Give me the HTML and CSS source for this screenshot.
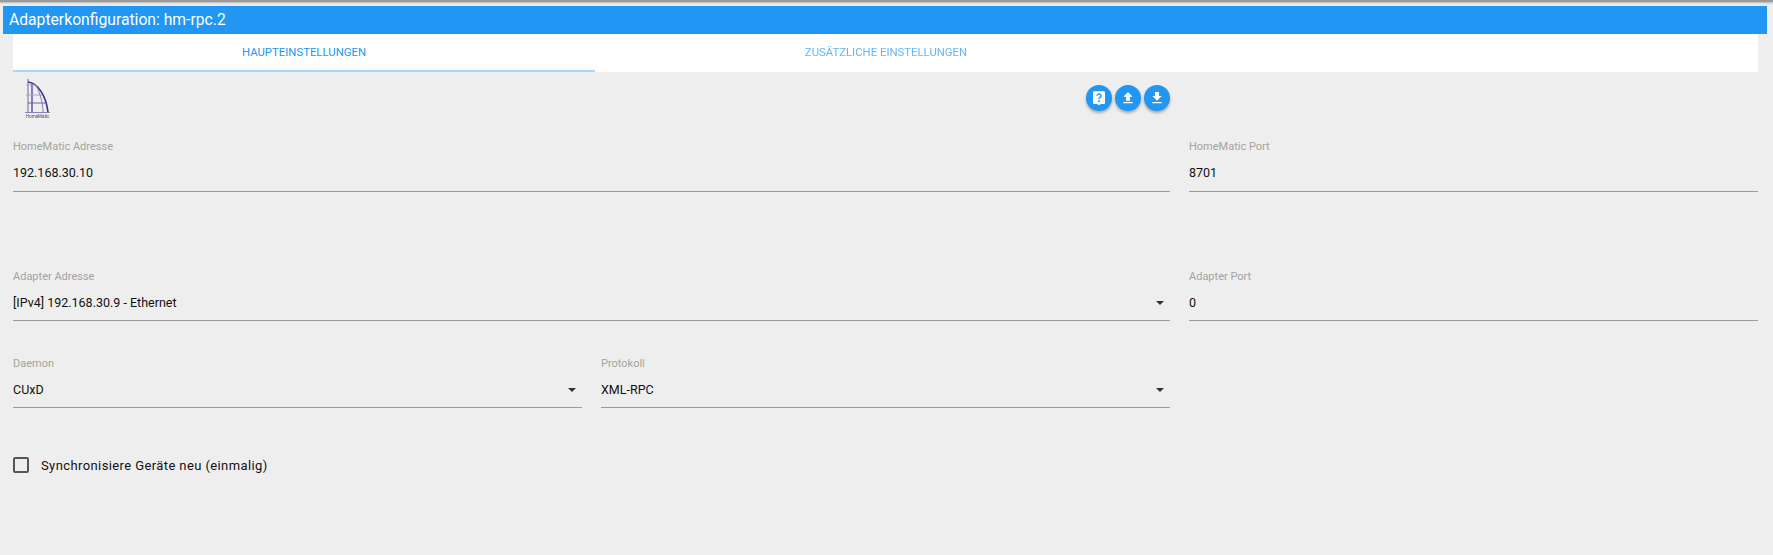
FILE: index.html
```html
<!DOCTYPE html>
<html lang="de">
<head>
<meta charset="utf-8">
<title>Adapterkonfiguration: hm-rpc.2</title>
<link rel="stylesheet" href="styles.css">
</head>
<body>
<div class="topline"></div>
<header class="title">Adapterkonfiguration: hm-rpc.2</header>
<main class="content">
  <nav class="tabs">
    <div class="tab active">Haupteinstellungen</div>
    <div class="tab">Zusätzliche Einstellungen</div>
  </nav>
  <section class="grid toolbar">
    <div class="toolbar-main">
      <svg class="logo" width="32" height="42" viewBox="0 0 32 42">
        <g fill="none" stroke="#3b2f8f">
          <path d="M5 1V34" stroke-width="1" opacity=".7"/>
          <path d="M9 5V34" stroke-width="1.200"/>
          <path d="M5 4C15 5 23 18 25 34" stroke-width="1.600"/>
          <path d="M3 7H13" stroke="#a5a1c8"/>
          <path d="M3 17H19" stroke="#a5a1c8"/>
          <path d="M5 25H22" stroke="#6a60ad"/>
          <path d="M13 7C17 15 20 25 20 34" stroke="#8580bd"/>
          <path d="M2 34.500H27" stroke="#8580bd"/>
        </g>
        <text x="3" y="39.500" class="logo-text">HomeMatic</text>
      </svg>
      <div class="actions">
        <button class="fab" type="button" aria-label="Hilfe">
          <svg width="16" height="16" viewBox="0 0 24 24"><path fill="#fff" d="M5 2h14a2 2 0 0 1 2 2v15a2 2 0 0 1-2 2h-4l-3 2-3-2H5a2 2 0 0 1-2-2V4a2 2 0 0 1 2-2z"/><path fill="none" stroke="#2196f3" stroke-width="2.200" d="M9.200 8.800a2.900 2.900 0 1 1 4.500 2.400c-1.100.8-1.700 1.300-1.700 2.800"/><path fill="#2196f3" d="M10.800 15.500h2.400v2.400h-2.400z"/></svg>
        </button>
        <button class="fab" type="button" aria-label="Hochladen">
          <svg width="16" height="16" viewBox="0 0 24 24"><path fill="#fff" d="M9 16h6v-6h4l-7-7-7 7h4v6zm-4 2h14v2H5v-2z"/></svg>
        </button>
        <button class="fab" type="button" aria-label="Herunterladen">
          <svg width="16" height="16" viewBox="0 0 24 24"><path fill="#fff" d="M19 9h-4V3H9v6H5l7 7 7-7zM5 18v2h14v-2H5z"/></svg>
        </button>
      </div>
    </div>
  </section>
  <section class="grid row-first">
    <div class="field span2">
      <label class="label">HomeMatic Adresse</label>
      <div class="value">192.168.30.10</div>
    </div>
    <div class="field">
      <label class="label">HomeMatic Port</label>
      <div class="value">8701</div>
    </div>
  </section>
  <section class="grid row-second">
    <div class="field span2">
      <label class="label">Adapter Adresse</label>
      <div class="value select">[IPv4] 192.168.30.9 - Ethernet</div>
    </div>
    <div class="field">
      <label class="label">Adapter Port</label>
      <div class="value">0</div>
    </div>
  </section>
  <section class="grid row-third">
    <div class="field">
      <label class="label">Daemon</label>
      <div class="value select">CUxD</div>
    </div>
    <div class="field">
      <label class="label">Protokoll</label>
      <div class="value select">XML-RPC</div>
    </div>
  </section>
  <div class="check-row">
    <span class="checkbox"></span>
    <span class="check-label">Synchronisiere Geräte neu (einmalig)</span>
  </div>
</main>
</body>
</html>
```
FILE: styles.css
```css
* { box-sizing: border-box; }
html, body { height: 100%; }
body {
  margin: 0;
  background: #eeeeee;
  font-family: Roboto, "Liberation Sans", sans-serif;
  color: #111;
  overflow: hidden;
}
.topline {
  height: 2px;
  background: #9a9a9a;
  margin-bottom: 4px;
  box-shadow: 0 1px 2px rgba(0, 0, 0, .25);
}
.title {
  height: 28px;
  margin: 0 6px 0 3px;
  padding-left: 6px;
  background: #2196f3;
  color: #fff;
  font-size: 15.700px;
  line-height: 28px;
}
.content { padding: 0 15px 0 13px; }
.tabs {
  display: flex;
  height: 38px;
  background: #fff;
}
.tab {
  width: 582px;
  height: 38px;
  display: flex;
  align-items: center;
  justify-content: center;
  color: #2196f3;
  opacity: .7;
  font-size: 11.350px;
  text-transform: uppercase;
  border-bottom: 2px solid transparent;
}
.tab.active {
  opacity: 1;
  border-bottom-color: #a8d5f8;
}
.grid {
  display: grid;
  grid-template-columns: repeat(3, 1fr);
  column-gap: 19px;
}
.toolbar-main {
  grid-column: span 2;
  display: flex;
  justify-content: space-between;
  height: 68px;
}
.logo { margin: 6px 0 0 10px; filter: blur(.3px); }
.logo-text { font-size: 4.500px; fill: #4a4a6a; }
.actions {
  display: flex;
  gap: 3px;
  padding-top: 13px;
}
.fab {
  width: 26px;
  height: 26px;
  padding: 0;
  border: 0;
  border-radius: 50%;
  background: #2196f3;
  display: flex;
  align-items: center;
  justify-content: center;
  box-shadow: 0 2px 3px rgba(0, 0, 0, .3);
}
.span2 { grid-column: span 2; }
.field { border-bottom: 1px solid #9b9b9b; }
.label {
  display: block;
  font-size: 11px;
  line-height: 14px;
  color: #a3a3a3;
}
.value {
  position: relative;
  font-size: 12.500px;
  line-height: 16px;
  padding: 11px 0 10px;
}
.select::after {
  content: "";
  position: absolute;
  right: 6px;
  top: 17px;
  border-left: 4px solid transparent;
  border-right: 4px solid transparent;
  border-top: 4px solid #333;
}
.row-second { margin-top: 78px; }
.row-third { margin-top: 36px; }
.row-second .value, .row-third .value { padding-bottom: 9px; }
.check-row {
  display: flex;
  align-items: center;
  margin-top: 49px;
}
.checkbox {
  width: 16px;
  height: 16px;
  border: 2px solid #555;
  border-radius: 2px;
}
.check-label {
  margin-left: 12px;
  font-size: 13px;
  letter-spacing: .4px;
}
```
